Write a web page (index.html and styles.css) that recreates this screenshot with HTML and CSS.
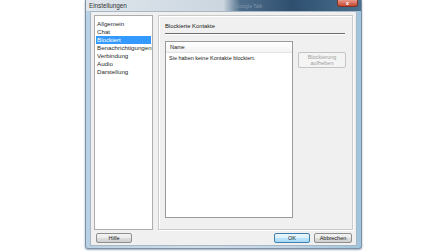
FILE: index.html
```html
<!DOCTYPE html>
<html>

<head>
    <title>Einstellungen</title>
    <link rel="stylesheet" href="styles.css">
</head>

<body>
    <div class="window">
        <!-- Titelleiste -->
        <div class="titlebar">
            <span class="title">Einstellungen</span>
            <span class="behind">Google Talk</span>
            <span class="close">x</span>
        </div>
        <div class="client">
            <div class="content">
                <!-- Linke Liste mit Kategorien -->
                <ul class="nav">
                    <li>Allgemein</li>
                    <li>Chat</li>
                    <li class="selected">Blockiert</li>
                    <li>Benachrichtigungen</li>
                    <li>Verbindung</li>
                    <li>Audio</li>
                    <li>Darstellung</li>
                </ul>
                <!-- Rechter Bereich -->
                <div class="group">
                    <div class="group-title">Blockierte Kontakte</div>
                    <div class="rule"></div>
                    <div class="group-body">
                        <div class="listview">
                            <div class="lv-header">Name</div>
                            <div class="lv-row">Sie haben keine Kontakte blockiert.</div>
                        </div>
                        <button class="btn disabled">Blockierung<br>aufheben</button>
                    </div>
                </div>
            </div>
            <div class="footer">
                <button class="btn">Hilfe</button>
                <div class="spacer"></div>
                <button class="btn default">OK</button>
                <button class="btn">Abbrechen</button>
            </div>
        </div>
    </div>
</body>

</html>
```

FILE: styles.css
```css
html,
body {
    margin: 0;
    width: 446px;
    height: 251px;
    background: #ffffff;
    overflow: hidden;
}

body {
    font-family: "Liberation Sans", Arial, sans-serif;
    font-size: 6.5px;
    color: #1a1a1a;
}

/* Fensterrahmen */
.window {
    margin-left: 85px;
    width: 277px;
    height: 249px;
    box-sizing: border-box;
    display: flex;
    flex-direction: column;
    background: linear-gradient(to right, #b9d1e4 0%, #cfdde9 40%, #c4d6e6 70%, #9fc4dc 100%);
    border: 1px solid #7c8fa3;
    border-top: none;
    border-radius: 0 0 3px 3px;
    box-shadow: 0 1px 2px rgba(60, 90, 120, 0.5);
}

.titlebar {
    height: 11px;
    display: flex;
    align-items: center;
    padding-left: 3px;
    background: linear-gradient(to right, #dfe6ec 0%, #cbd6df 50%, #4f6e8b 56%, #2f4f6f 75%, #49708f 100%);
    position: relative;
}

.title {
    color: #333;
    font-size: 6.3px;
}

.behind {
    margin-left: 109px;
    color: #7f97ad;
    font-size: 5px;
}

.close {
    position: absolute;
    right: 3px;
    top: 0;
    width: 21px;
    height: 7px;
    line-height: 6px;
    text-align: center;
    color: #fff;
    font-size: 6px;
    font-weight: bold;
    background: linear-gradient(#e79a8c, #c6462f);
    border: 1px solid #7a3528;
    border-top: none;
    border-radius: 0 0 3px 3px;
    box-sizing: border-box;
}

.client {
    flex: 1;
    margin: 0 4px 2px 4px;
    background: #f0f0f0;
    border: 1px solid #a9b7c5;
    display: flex;
    flex-direction: column;
    padding: 3px 3px 0 3px;
}

.content {
    display: flex;
    gap: 5px;
    height: 215px;
}

.nav {
    list-style: none;
    margin: 0;
    padding: 4px 1px;
    width: 59px;
    box-sizing: border-box;
    background: #fff;
    border: 1px solid #adadad;
    color: #2a2a2a;
}

.nav li {
    height: 8px;
    line-height: 8px;
    padding-left: 1px;
    font-size: 6.2px;
    white-space: nowrap;
}

.nav li.selected {
    background: #3399ff;
    color: #fff;
}

.group {
    flex: 1;
    margin-right: 1px;
    border: 1px solid #c9c9c9;
    box-shadow: inset 1px 1px 0 #fff, 1px 1px 0 #fff;
    display: flex;
    flex-direction: column;
    padding: 0 6px 0 6px;
}

.group-title {
    margin-top: 6px;
    height: 8px;
    line-height: 8px;
    font-size: 5.8px;
}

.rule {
    margin: 3px 0 0 0;
    height: 1px;
    background: #6b6b6b;
    border-bottom: 1px solid #fff;
    margin-right: 1px;
}

.group-body {
    display: flex;
    gap: 5px;
    margin-top: 6px;
}

.listview {
    width: 128px;
    height: 177px;
    box-sizing: border-box;
    background: #fff;
    border: 1px solid #9a9a9a;
}

.lv-header {
    height: 10px;
    line-height: 10px;
    padding-left: 4px;
    font-size: 5.5px;
    border-bottom: 1px solid #e3e3e3;
    background: linear-gradient(#ffffff, #f3f3f3);
}

.lv-row {
    padding-left: 3px;
    margin-top: 1px;
    line-height: 8px;
    font-size: 5.5px;
    white-space: nowrap;
}

.btn {
    font-family: "Liberation Sans", Arial, sans-serif;
    font-size: 5.5px;
    color: #222;
    width: 36px;
    height: 10px;
    padding: 0;
    line-height: 8px;
    border: 1px solid #8e8f8f;
    border-radius: 2px;
    background: linear-gradient(#f2f2f2 0%, #ebebeb 50%, #dddddd 51%, #cfcfcf 100%);
}

.btn.disabled {
    margin-top: 11px;
    width: 48px;
    height: 16px;
    line-height: 6px;
    color: #a0a0a0;
    border-color: #c4c4c4;
    background: #f4f4f4;
}

.btn.default {
    border-color: #3c7fb1;
    background: linear-gradient(#eaf6fd 0%, #d9f0fc 50%, #bee6fd 51%, #a7d9f5 100%);
}

.footer {
    display: flex;
    gap: 4px;
    margin-top: 3px;
    padding: 0 1px 0 2px;
}

.footer .btn:last-child {
    width: 38px;
}

.spacer {
    flex: 1;
}
```
